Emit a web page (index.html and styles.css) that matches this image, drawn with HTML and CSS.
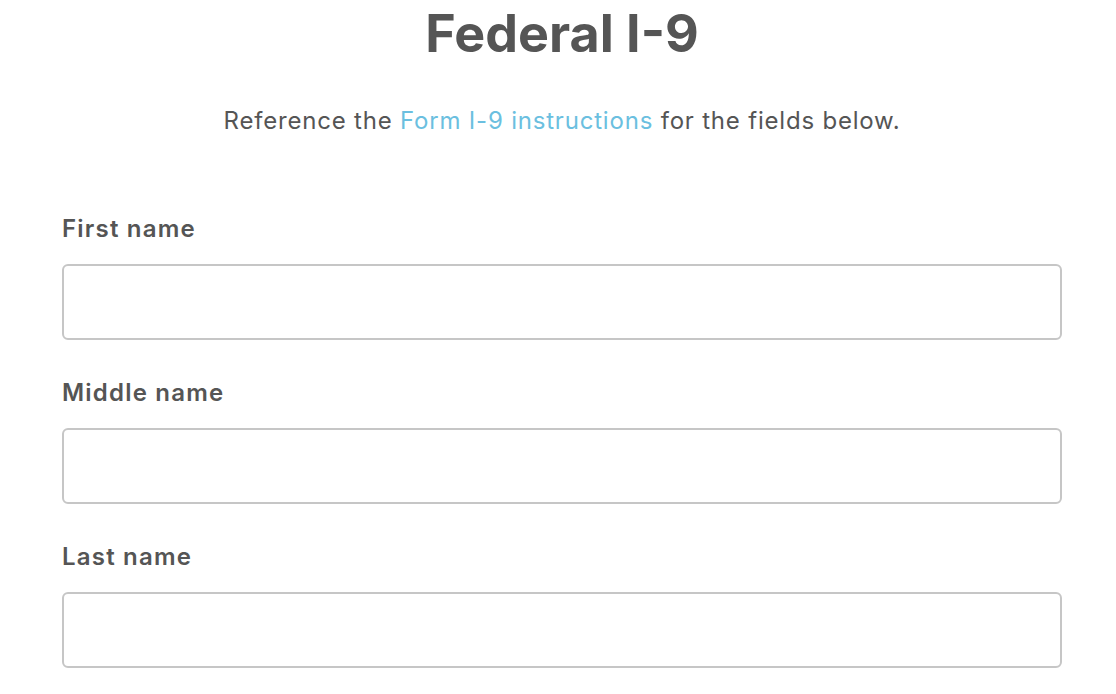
FILE: index.html
```html
<!DOCTYPE html>
<html lang="en">
  <head>
    <meta charset="UTF-8" />
    <title>Federal I-9</title>
    <link rel="stylesheet" href="styles.css">
  </head>
  <body>
    <!-- form page -->
    <div class="container">
      <h1>Federal I-9</h1>
      <p class="intro">
        Reference the <a href="#">Form I-9 instructions</a> for the fields below.
      </p>

      <div class="field">
        <label for="first-name">First name</label>
        <input type="text" id="first-name" />
      </div>
      <div class="field">
        <label for="middle-name">Middle name</label>
        <input type="text" id="middle-name" />
      </div>
      <div class="field">
        <label for="last-name">Last name</label>
        <input type="text" id="last-name" />
      </div>
    </div>
  </body>
</html>
```

FILE: styles.css
```css
body {
  margin: 0;
  padding: 0;
  background: #fff;
  color: #555;
  font-family: Inter, "Open Sans", sans-serif;
}

/* centred column */
.container {
  width: 1000px;
  margin: 0 0 0 62px;
}

h1 {
  margin: 0;
  padding-top: 2px;
  font-size: 52px;
  font-weight: 700;
  line-height: 64px;
  text-align: center;
}

.intro {
  margin: 39px 0 0;
  font-size: 24px;
  line-height: 32px;
  letter-spacing: 0.8px;
  text-align: center;
}
.intro a {
  color: #6bbfe0;
  text-decoration: none;
}

/* form fields */
.field {
  display: flex;
  flex-direction: column;
}
.field:first-of-type {
  margin-top: 76px;
}
.field label {
  font-size: 24px;
  font-weight: 600;
  line-height: 32px;
  letter-spacing: 1.2px;
  margin-bottom: 19px;
}
.field input {
  box-sizing: border-box;
  height: 76px;
  border: 2px solid #c6c6c6;
  border-radius: 6px;
  margin-bottom: 37px;
}
```
